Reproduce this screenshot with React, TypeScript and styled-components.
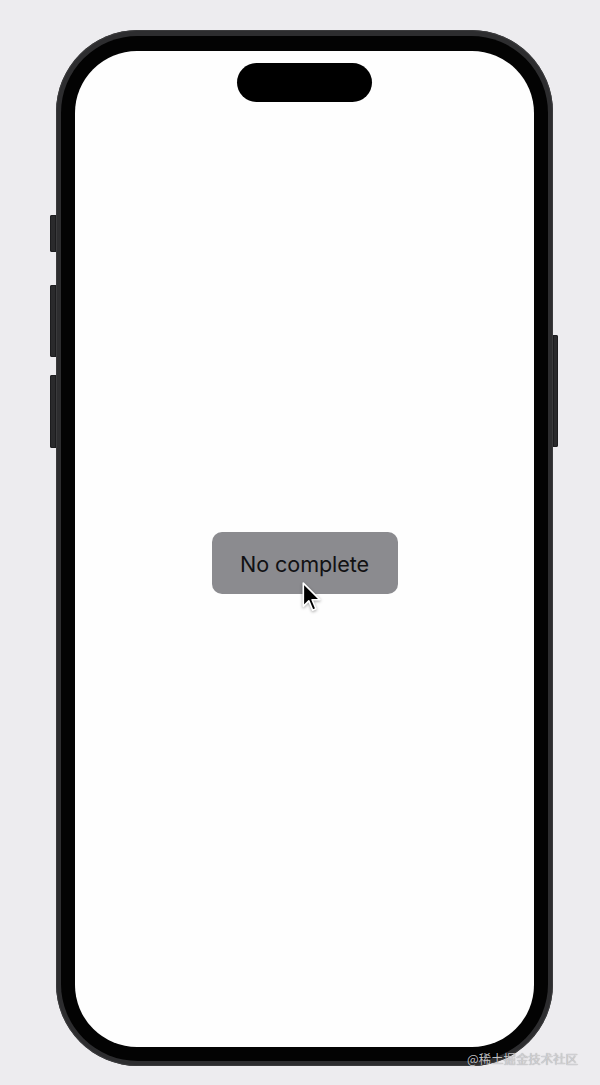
import React from "react";
import styled, { createGlobalStyle } from "styled-components";

const Global = createGlobalStyle`
  html, body { margin: 0; padding: 0; background: #edecef; }
  body { font-family: Inter, "Noto Sans", sans-serif; }
`;

const Stage = styled.div`
  position: relative;
  width: 600px;
  height: 1085px;
  box-sizing: border-box;
  padding: 30px 0 0 50px;
  display: flex;
  align-items: flex-start;
  background: #edecef;
  overflow: hidden;
`;

const Rail = styled.div<{ $top: number }>`
  width: 6px;
  display: flex;
  flex-direction: column;
  padding-top: ${(p) => p.$top}px;
`;

const SideKey = styled.div<{ $h: number; $gap: number; $side: "l" | "r" }>`
  height: ${(p) => p.$h}px;
  margin-top: ${(p) => p.$gap}px;
  background: #2a2a2c;
  border-radius: ${(p) => (p.$side === "l" ? "2px 0 0 2px" : "0 2px 2px 0")};
  box-shadow: inset 0 0 0 1px #1c1c1e;
  width: ${(p) => (p.$side === "l" ? 6 : 5)}px;
`;

const Frame = styled.div`
  width: 497px;
  height: 1036px;
  box-sizing: border-box;
  padding: 6px 5px 5px 5px;
  border-radius: 82px;
  background: #2d2d2f;
  box-shadow: inset 0 0 0 1px #3a3a3c;
`;

const Bezel = styled.div`
  width: 100%;
  height: 100%;
  box-sizing: border-box;
  padding: 15px 14px 14px 14px;
  border-radius: 77px;
  background: #030303;
`;

const Screen = styled.div`
  width: 100%;
  height: 100%;
  border-radius: 62px;
  background: #fefefe;
  display: flex;
  flex-direction: column;
  align-items: center;
  overflow: hidden;
`;

const Island = styled.div`
  margin-top: 12px;
  width: 135px;
  height: 39px;
  border-radius: 20px;
  background: #000;
`;

const Body = styled.div`
  padding-top: 430px;
  display: flex;
  justify-content: center;
  width: 100%;
`;

const ActionButton = styled.button`
  position: relative;
  width: 186px;
  height: 62px;
  border: none;
  border-radius: 10px;
  background: #8b8b8f;
  color: #111113;
  font-family: Inter, "Liberation Sans", sans-serif;
  font-size: 21.6px;
  font-weight: 400;
  letter-spacing: -0.1px;
  padding: 2px 0 0 0;
  display: flex;
  align-items: center;
  justify-content: center;
  cursor: default;
`;

const Cursor = styled.svg`
  position: absolute;
  left: 89px;
  top: 49px;
  width: 20px;
  height: 33px;
  filter: drop-shadow(0 1px 1.5px rgba(0, 0, 0, 0.35));
`;

const Watermark = styled.div`
  position: absolute;
  left: 467px;
  top: 1051px;
  font-family: "Noto Sans CJK SC", "Noto Sans", sans-serif;
  font-size: 12.4px;
  line-height: 16px;
  color: rgba(214, 214, 218, 0.9);
  text-shadow: 0 0 1px rgba(0, 0, 0, 0.4);
  white-space: nowrap;
`;

export default function App() {
  return (
    <>
      <Global />
      <Stage>
        <Rail $top={185}>
          <SideKey $side="l" $h={37} $gap={0} />
          <SideKey $side="l" $h={72} $gap={33} />
          <SideKey $side="l" $h={73} $gap={18} />
        </Rail>
        <Frame>
          <Bezel>
            <Screen>
              <Island />
              <Body>
                <ActionButton>
                  No complete
                  <Cursor viewBox="0 0 18 30">
                    <path
                      d="M2 2 L2 23 L7 18 L10.5 26.5 L13.5 25.2 L10 17 L17 17 Z"
                      fill="#000"
                      stroke="#fff"
                      strokeWidth="1.5"
                      strokeLinejoin="round"
                    />
                  </Cursor>
                </ActionButton>
              </Body>
            </Screen>
          </Bezel>
        </Frame>
        <Rail $top={305}>
          <SideKey $side="r" $h={112} $gap={0} />
        </Rail>
        <Watermark>@稀土掘金技术社区</Watermark>
      </Stage>
    </>
  );
}
